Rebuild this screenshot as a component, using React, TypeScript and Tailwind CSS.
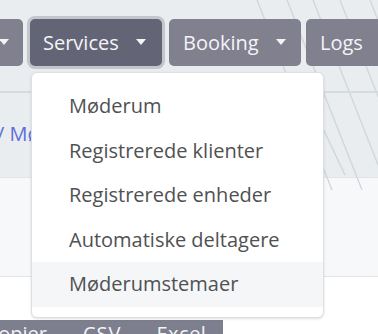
import { ReactNode } from 'react';

const menuItems = [
  'Møderum',
  'Registrerede klienter',
  'Registrerede enheder',
  'Automatiske deltagere',
  'Møderumstemaer',
];

function Caret() {
  return (
    <svg width="10" height="6" viewBox="0 0 10 6" className="ml-[17px] mt-[-2px]">
      <path d="M0 0 L10 0 L5 6 Z" fill="currentColor" />
    </svg>
  );
}

function NavButton({
  children,
  caret,
  active,
  className = '',
}: {
  children: ReactNode;
  caret?: boolean;
  active?: boolean;
  className?: string;
}) {
  return (
    <div
      className={`h-[47px] shrink-0 flex items-center rounded-[5px] text-[20px] text-[#f4f4f6] ${
        active ? 'bg-[#636576] ring-[3px] ring-[#c3c6cc]' : 'bg-[#80808f]'
      } ${className}`}
    >
      {children}
      {caret && <Caret />}
    </div>
  );
}

function BackgroundLines() {
  const starts = [257, 287, 313, 340, 370, 395];
  return (
    <svg className="absolute inset-0" width="378" height="334" viewBox="0 0 378 334">
      {starts.map((x, i) => (
        <line key={i} x1={x} y1={0} x2={x + 75} y2={190} stroke="#cfd5d9" strokeWidth="1.3" />
      ))}
      <line x1={300} y1={80} x2={345} y2={175} stroke="#cfd5d9" strokeWidth="1.3" />
    </svg>
  );
}

export default function App() {
  return (
    <div
      className="relative w-[378px] h-[334px] overflow-hidden bg-white"
      style={{ fontFamily: '"Open Sans", Lato, sans-serif' }}
    >
      <div className="relative bg-[#e9edef] h-[177px]">
        <BackgroundLines />
        <div className="relative flex items-start pt-[19px]">
          <NavButton caret className="w-[132px] ml-[-109px] justify-end pr-[14px]">
            <span className="hidden">Admin</span>
          </NavButton>
          <NavButton caret active className="w-[132px] ml-[7px] pl-[13px]">
            Services
          </NavButton>
          <NavButton caret className="w-[132px] ml-[7px] pl-[14px]">
            Booking
          </NavButton>
          <NavButton className="w-[90px] ml-[5px] pl-[14px]">Logs</NavButton>
        </div>
        <div className="relative mt-[25px] border-t-2 border-[#d6dbde]" />
        <div className="relative mt-[31px] text-[20px] text-[#5b6fdc] ml-[-3px] leading-none">
          / Møderum
        </div>
      </div>
      <div className="h-[100px] bg-[#f7f8fa] border-y border-[#e1e4e8]" />
      <div className="mt-[43px] flex h-[30px] w-[223px] bg-[#7d7f8f] text-[#f4f4f6] text-[20px] leading-none">
        <span className="ml-[-14px] mt-[4px]">Kopier</span>
        <span className="ml-[36px] mt-[4px] tracking-[1px]">CSV</span>
        <span className="ml-[35px] mt-[4px] tracking-[0.5px]">Excel</span>
      </div>

      <div className="absolute left-[31px] top-[72px] w-[293px] h-[246px] bg-white border border-[#dcdfe3] rounded-[6px] shadow-sm py-[11px]">
        {menuItems.map((item, i) => (
          <div
            key={item}
            className={`h-[44.5px] flex items-center pl-[37px] text-[20px] text-[#505152] ${
              i === menuItems.length - 1 ? 'bg-[#f5f6f8]' : ''
            }`}
          >
            {item}
          </div>
        ))}
      </div>
    </div>
  );
}
